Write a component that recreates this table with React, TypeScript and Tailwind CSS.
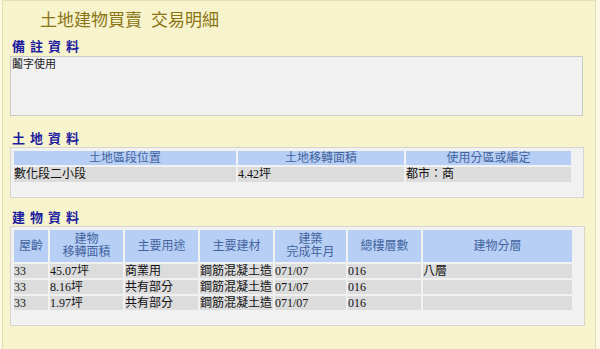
import React from "react";

const sans = { fontFamily: '"Liberation Sans", "Noto Sans CJK TC", sans-serif' };

const buildingRows = [
  ["33", "45.07坪", "商業用", "鋼筋混凝土造", "071/07", "016", "八層"],
  ["33", "8.16坪", "共有部分", "鋼筋混凝土造", "071/07", "016", ""],
  ["33", "1.97坪", "共有部分", "鋼筋混凝土造", "071/07", "016", ""],
];

const SectionTitle = ({ text }: { text: string }) => (
  <div className="pl-[9px] text-[13px] leading-[16px] font-bold tracking-[5px] text-[#1c1ca0]">
    {text}
  </div>
);

const App = () => {
  return (
    <div
      className="w-[600px] h-[349px] bg-[#fbf9e4] overflow-hidden"
      style={{ fontFamily: '"Liberation Serif", "Noto Sans CJK TC", serif' }}
    >
      <div className="w-[594px] h-[349px] ml-[2px] border-l border-t border-r border-[#e3dfb4] bg-[#f6f3cd]">
        <div className="pl-[37px] pt-[9px] h-[38px] text-[17px] leading-[22px] text-[#8a7414]" style={sans}>
          土地建物買賣<span className="ml-[9px]">交易明細</span>
        </div>

        <div style={sans}>
          <SectionTitle text="備註資料" />
        </div>
        <div className="ml-[7px] mt-[1px] w-[573px] h-[60px] bg-[#f1f1f1] border border-[#cbcbc6] px-[1px] text-[11px] leading-[14px] text-[#222]" style={sans}>
          鬮字使用
        </div>

        <div className="mt-[15px]" style={sans}>
          <SectionTitle text="土地資料" />
        </div>
        <div className="ml-[7px] w-[574px] h-[51px] bg-[#f1f1f1] border border-[#d6d6d0] pt-[1px] pl-[1px]">
          <table className="table-fixed w-[561px] border-separate border-spacing-[2px] text-[12px] leading-[13px]">
            <thead>
              <tr className="bg-[#b7cff5] text-[#43649e]" style={sans}>
                <th className="w-[222px] font-normal h-[14px]">土地區段位置</th>
                <th className="w-[166px] font-normal">土地移轉面積</th>
                <th className="font-normal">使用分區或編定</th>
              </tr>
            </thead>
            <tbody>
              <tr className="bg-[#dcdcdc] text-[#111]">
                <td className="h-[15px]" style={sans}>數化段二小段</td>
                <td>4.42坪</td>
                <td style={sans}>都市：商</td>
              </tr>
            </tbody>
          </table>
        </div>

        <div className="mt-[12px]" style={sans}>
          <SectionTitle text="建物資料" />
        </div>
        <div className="ml-[7px] w-[575px] h-[100px] bg-[#f1f1f1] border border-[#d6d6d0] pt-[1px] pl-[1px]">
          <table className="table-fixed w-[562px] border-separate border-spacing-[2px] text-[12px] leading-[14px]">
            <thead>
              <tr className="bg-[#b7cff5] text-[#43649e]" style={sans}>
                <th className="w-[34px] h-[32px] font-normal">屋齡</th>
                <th className="w-[73px] font-normal leading-[13px]">建物<br />移轉面積</th>
                <th className="w-[73px] font-normal">主要用途</th>
                <th className="w-[73px] font-normal">主要建材</th>
                <th className="w-[71px] font-normal leading-[13px]">建築<br />完成年月</th>
                <th className="w-[73px] font-normal">總樓層數</th>
                <th className="font-normal">建物分層</th>
              </tr>
            </thead>
            <tbody>
              {buildingRows.map((row, i) => (
                <tr key={i} className="bg-[#dcdcdc] text-[#111]">
                  {row.map((cell, j) => (
                    <td
                      key={j}
                      className="h-[14px] whitespace-nowrap overflow-hidden"
                      style={j === 2 || j === 3 || j === 6 ? sans : undefined}
                    >
                      {cell}
                    </td>
                  ))}
                </tr>
              ))}
            </tbody>
          </table>
        </div>
      </div>
    </div>
  );
};

export default App;
